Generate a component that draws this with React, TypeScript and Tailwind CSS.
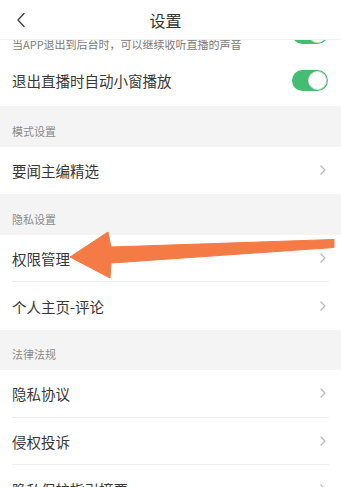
import React from 'react';

const font = { fontFamily: '"Noto Sans CJK SC", "Noto Sans", sans-serif' };

const Chevron = () => (
  <svg width="6" height="10" viewBox="0 0 6 10" fill="none">
    <path d="M1 1l4 4-4 4" stroke="#b8b8b8" strokeWidth="1.2" strokeLinecap="round" strokeLinejoin="round" />
  </svg>
);

const Toggle = ({ className = '' }: { className?: string }) => (
  <div className={`w-[36px] h-[21px] rounded-full bg-[#43bd72] flex items-center justify-end pr-[1px] shrink-0 ${className}`}>
    <div className="w-[19px] h-[19px] rounded-full bg-white border border-[#dcdcdc]" />
  </div>
);

const SectionHeader = ({ label }: { label: string }) => (
  <div className="h-[40.5px] bg-[#f4f4f4] px-[12px] flex items-end pb-[9px]">
    <span className="text-[11px] leading-[13px] text-[#8a8a8a]">{label}</span>
  </div>
);

const LinkRow = ({ label, divider = false }: { label: string; divider?: boolean }) => (
  <div className="px-[12px] bg-white">
    <div className={`h-[47.5px] flex items-center justify-between ${divider ? 'border-b border-[#efefef]' : ''}`}>
      <span className="text-[14.5px] text-[#383838] pt-[2px]">{label}</span>
      <div className="pr-[3px]">
        <Chevron />
      </div>
    </div>
  </div>
);

export default function App() {
  return (
    <div className="relative w-[341px] h-[487px] bg-white overflow-hidden" style={font}>
      {/* top bar */}
      <div className="h-[40px] bg-white border-b border-[#f0f0f0] flex items-center px-[16px] relative">
        <svg width="10" height="16" viewBox="0 0 10 16" fill="none">
          <path d="M8 1.5L2 8l6 6.5" stroke="#444" strokeWidth="1.4" strokeLinecap="round" strokeLinejoin="round" />
        </svg>
        <span className="flex-1 text-center text-[16px] text-[#333] pr-[10px] pt-[1px]">设置</span>
        <div className="w-[10px]" />
      </div>

      {/* scrolled content, partially clipped at top */}
      <div className="h-[15px] overflow-hidden flex items-end justify-between px-[12px]">
        <span className="text-[11px] leading-[14px] pb-[4px] text-[#7a7a7a] whitespace-nowrap">
          当APP退出到后台时，可以继续收听直播的声音
        </span>
        <Toggle className="mb-[11px] mr-[1px]" />
      </div>

      <div className="h-[51px] flex items-center justify-between px-[12px] bg-white">
        <span className="text-[14.5px] text-[#383838] pt-[1px]">退出直播时自动小窗播放</span>
        <Toggle className="mr-[1px]" />
      </div>

      <SectionHeader label="模式设置" />
      <LinkRow label="要闻主编精选" />

      <SectionHeader label="隐私设置" />
      <LinkRow label="权限管理" divider />
      <LinkRow label="个人主页-评论" />

      <SectionHeader label="法律法规" />
      <LinkRow label="隐私协议" divider />
      <LinkRow label="侵权投诉" divider />
      <LinkRow label="隐私保护指引摘要" />

      {/* annotation arrow */}
      <svg
        className="absolute left-0 top-0 pointer-events-none"
        width="341"
        height="487"
        viewBox="0 0 341 487"
      >
        <polygon
          points="334,239.5 334,247.5 111,263 110,278 70,257 108,232 111,247"
          fill="#f47a46"
          stroke="#f47a46"
          strokeWidth="1"
          strokeLinejoin="round"
        />
      </svg>
    </div>
  );
}
